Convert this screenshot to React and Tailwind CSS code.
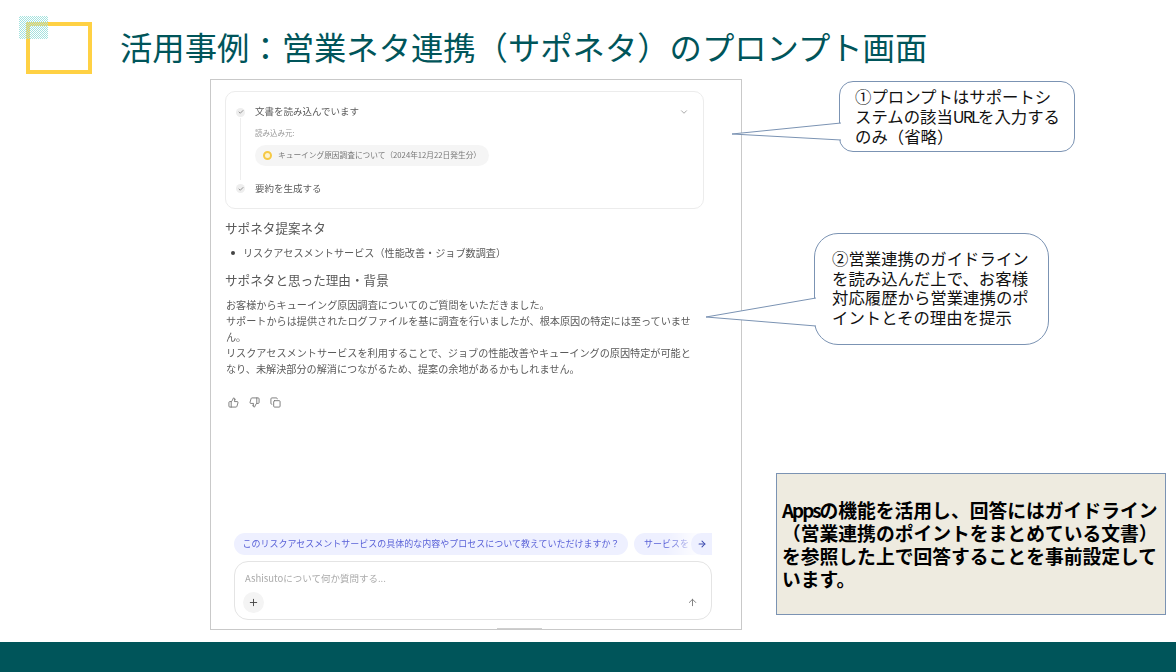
import { Check, ChevronDown, ThumbsUp, ThumbsDown, Copy, Plus, ArrowUp, ArrowRight } from 'lucide-react'

const bodyLines = [
  'お客様からキューイング原因調査についてのご質問をいただきました。',
  'サポートからは提供されたログファイルを基に調査を行いましたが、根本原因の特定には至っていませ',
  'ん。',
  'リスクアセスメントサービスを利用することで、ジョブの性能改善やキューイングの原因特定が可能と',
  'なり、未解決部分の解消につながるため、提案の余地があるかもしれません。',
]

function StepDot() {
  return (
    <span className="w-[9px] h-[9px] rounded-full bg-[#eeeeee] flex items-center justify-center shrink-0">
      <Check size={6} strokeWidth={3} className="text-[#777]" />
    </span>
  )
}

function CalloutTail({ width, height, points }) {
  return (
    <svg className="absolute top-0 right-full -mr-px overflow-visible" width={width} height={height}>
      <polygon points={points} fill="white" />
      <polyline points={points} fill="none" stroke="#7b93b3" strokeWidth="1" />
    </svg>
  )
}

function ChatPanel() {
  return (
    <div className="w-[532px] h-[551px] border border-[#c9c9c9] bg-white shrink-0 overflow-hidden flex flex-col blur-[0.4px] text-[#5a5a5a]">
      <div className="mt-[11px] ml-[14px] w-[479px] h-[118px] border border-[#ececec] rounded-[10px] pl-[10px] pr-[14px] shrink-0 relative">
        <div className="flex items-center gap-[10px] h-[12px] mt-[14px] text-[9.5px] leading-none">
          <StepDot />
          <span>文書を読み込んでいます</span>
          <ChevronDown size={10} className="ml-auto text-[#999]" />
        </div>
        <div className="ml-[19px] mt-[11px] text-[7.5px] leading-none text-[#999]">読み込み元:</div>
        <div className="ml-[19px] mt-[8px] w-[234px] h-[21px] rounded-full bg-[#f5f5f5] flex items-center gap-[6px] pl-[8px] text-[7.7px] text-[#777] whitespace-nowrap">
          <span className="w-[9px] h-[9px] rounded-full border-2 border-[#f6c945] bg-[#fdf3d0] shrink-0" />
          <span>キューイング原因調査について（2024年12月22日発生分）</span>
        </div>
        <div className="flex items-center gap-[10px] h-[12px] mt-[17px] text-[9.5px] leading-none">
          <StepDot />
          <span>要約を生成する</span>
        </div>
        <div className="absolute left-[14px] top-[26px] h-[62px] w-px bg-[#eeeeee]" />
      </div>

      <h3 className="ml-[14px] mt-[10px] text-[12.6px] leading-[18px] font-normal">サポネタ提案ネタ</h3>
      <div className="ml-[20px] mt-[9px] flex items-center gap-[8px] text-[10.15px] leading-[14px]">
        <span className="w-[4px] h-[4px] rounded-full bg-[#444]" />
        <span>リスクアセスメントサービス（性能改善・ジョブ数調査）</span>
      </div>
      <h3 className="ml-[14px] mt-[11px] text-[12.6px] leading-[18px] font-normal">サポネタと思った理由・背景</h3>
      <div className="ml-[15px] mt-[8px] text-[10.15px] leading-[16px] whitespace-nowrap">
        {bodyLines.map(line => (
          <div key={line}>{line}</div>
        ))}
      </div>
      <div className="ml-[17px] mt-[20px] flex items-center gap-[10px] text-[#777]">
        <ThumbsUp size={11} />
        <ThumbsDown size={11} />
        <Copy size={11} />
      </div>

      <div className="mt-auto ml-[23px] w-[478px] h-[22px] shrink-0 flex gap-[6px] relative overflow-hidden text-[9px] leading-[22px] text-[#5a62d8] whitespace-nowrap">
        <span className="w-[394px] shrink-0 bg-[#eef0ff] rounded-full text-center">このリスクアセスメントサービスの具体的な内容やプロセスについて教えていただけますか？</span>
        <span className="w-[78px] shrink-0 bg-[#eef0ff] rounded-l-full pl-[10px] overflow-hidden">サービスを</span>
        <span className="absolute right-[10px] top-0 w-[36px] h-[22px] bg-gradient-to-r from-transparent to-white" />
        <span className="absolute right-0 top-0 w-[21px] h-[22px] rounded-full bg-[#eef0ff] flex items-center justify-center text-[#3f4db0]">
          <ArrowRight size={10} strokeWidth={2.5} />
        </span>
      </div>
      <div className="ml-[23px] mt-[6px] w-[478px] h-[59px] shrink-0 border border-[#e4e4e4] rounded-[14px] px-[8px] flex flex-col">
        <div className="mt-[9px] ml-[2px] text-[9.5px] leading-[14px] text-[#aaa]">Ashisutoについて何か質問する...</div>
        <div className="mt-[7px] flex items-center justify-between">
          <span className="w-[21px] h-[21px] rounded-full bg-[#f4f4f4] flex items-center justify-center text-[#444]">
            <Plus size={11} />
          </span>
          <ArrowUp size={11} className="mr-[5px] text-[#777]" />
        </div>
      </div>
      {/* only the tops of this line survive the crop in the screenshot */}
      <div className="mt-[8px] ml-[286px] w-[45px] h-px shrink-0 bg-[#cfcfcf]" />
    </div>
  )
}

export default function App() {
  return (
    <div className="w-[1176px] h-[672px] bg-white overflow-hidden flex flex-col font-['Noto_Sans_CJK_JP',sans-serif]">
      <header className="h-[79px] shrink-0 flex items-start pl-[26px] pt-[22px]">
        <div className="relative w-[66px] h-[52px] border-[4px] border-[#ffd144] shrink-0">
          <div className="absolute -left-[11px] -top-[10px] w-[29px] h-[23px] bg-[repeating-conic-gradient(#a5e2de_0_25%,transparent_0_50%)] bg-[length:2px_2px]" />
        </div>
        <h1 className="ml-[28px] -mt-[2px] text-[32.35px] leading-[52px] font-normal text-[#00555a] whitespace-nowrap">
          活用事例：営業ネタ連携（サポネタ）のプロンプト画面
        </h1>
      </header>

      <main className="flex-1 flex pl-[210px]">
        <ChatPanel />
        <div className="flex flex-col items-start text-[16.4px] text-[#111]">
          <div className="relative ml-[97px] mt-[2px] w-[236px] h-[71px] bg-white border border-[#7b93b3] rounded-[14px] pl-[15px] pt-[4px] leading-[20px] whitespace-nowrap">
            <CalloutTail width={109} height={71} points="109,41 0,52 109,58" />
            <div>①プロンプトはサポートシ</div>
            <div>ステムの該当<span className="tracking-[-2px]">URL</span>を入力する</div>
            <div>のみ（省略）</div>
          </div>
          <div className="relative ml-[72px] mt-[81px] w-[235px] h-[112px] bg-white border border-[#7b93b3] rounded-[24px] pl-[17px] pt-[15px] leading-[19.5px] whitespace-nowrap">
            <CalloutTail width={110} height={112} points="110,64 0,83 110,92" />
            <div>②営業連携のガイドライン</div>
            <div>を読み込んだ上で、お客様</div>
            <div>対応履歴から営業連携のポ</div>
            <div>イントとその理由を提示</div>
          </div>
          <div className="ml-[34px] mt-[128px] w-[390px] h-[142px] bg-[#eeebe0] border border-[#7b93b3] pl-[5px] flex flex-col justify-center text-[18.8px] leading-[23px] font-bold text-black whitespace-nowrap">
            <div><span className="tracking-[-2px]">Apps</span>の機能を活用し、回答にはガイドライン</div>
            <div>（営業連携のポイントをまとめている文書）</div>
            <div>を参照した上で回答することを事前設定して</div>
            <div>います。</div>
          </div>
        </div>
      </main>

      <footer className="h-[30px] shrink-0 bg-[#00555a]" />
    </div>
  )
}
